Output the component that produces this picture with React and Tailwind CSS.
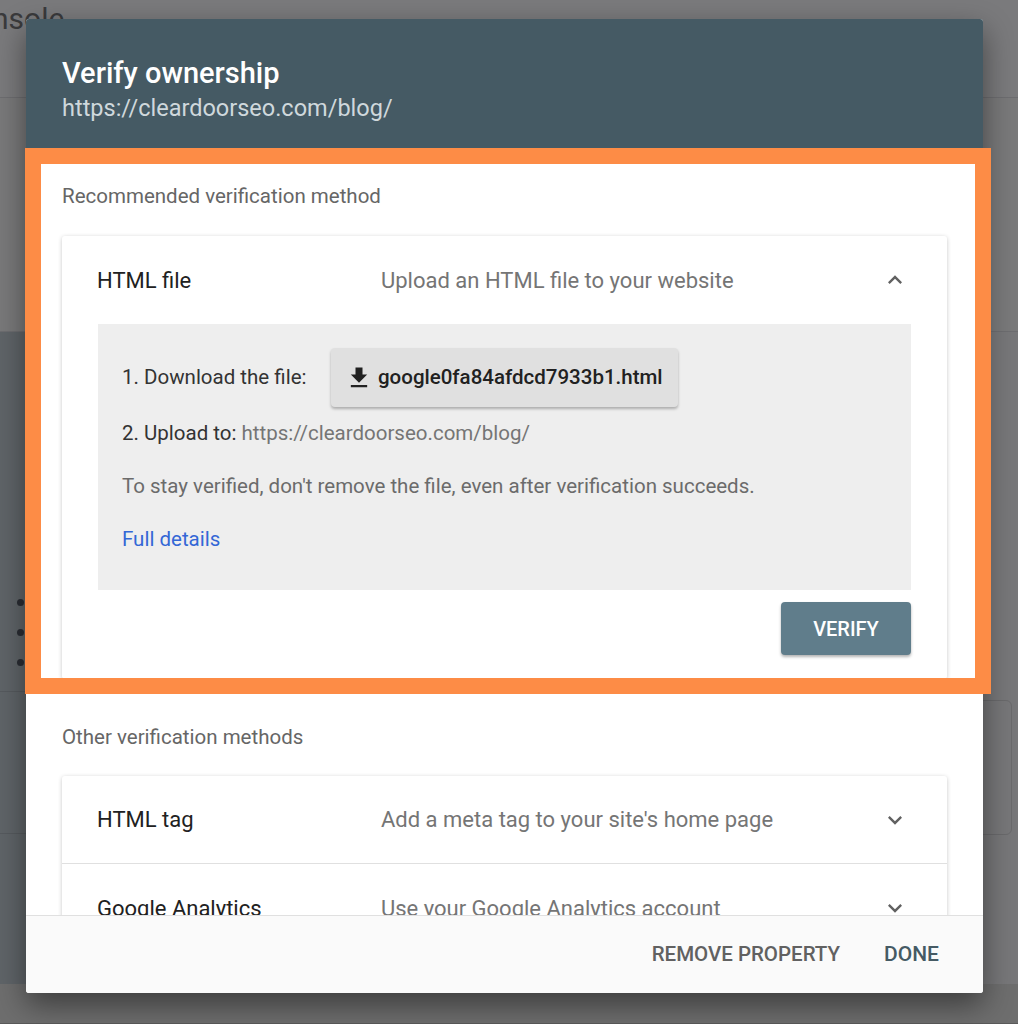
import React from "react";

const font = { fontFamily: "Roboto, 'Noto Sans', Arial, sans-serif" };

function ChevronUp() {
  return (
    <svg width="28" height="28" viewBox="0 0 24 24" fill="#616161">
      <path d="M12 8l-6 6 1.41 1.41L12 10.83l4.59 4.58L18 14z" />
    </svg>
  );
}
function ChevronDown() {
  return (
    <svg width="28" height="28" viewBox="0 0 24 24" fill="#616161">
      <path d="M16.59 8.59L12 13.17 7.41 8.59 6 10l6 6 6-6z" />
    </svg>
  );
}
function DownloadIcon() {
  return (
    <svg width="28" height="28" viewBox="0 0 24 24" fill="#212121">
      <path d="M19 9h-4V3H9v6H5l7 7 7-7zM5 18v2h14v-2H5z" />
    </svg>
  );
}

function MethodRow({ title, desc, border }) {
  return (
    <div className={`flex h-[88px] shrink-0 items-center pl-[35px] pr-[38px] ${border ? "border-b border-[#e0e0e0]" : ""}`}>
      <div className="w-[284px] text-[22px] text-[#212121]">{title}</div>
      <div className="flex-1 text-[22px] text-[#757575]">{desc}</div>
      <ChevronDown />
    </div>
  );
}

export default function App() {
  return (
    <div className="relative h-[1024px] w-[1018px] overflow-hidden bg-[#777779]" style={font}>
      {/* background page (dimmed) */}
      <div className="flex h-full flex-col">
        <div className="h-[98px] shrink-0 border-b border-[#6d6d70] bg-[#7a7a7c]">
          <div className="ml-[-8px] mt-[1px] text-[30px] leading-[36px] text-[#3a3a3c]">nsole</div>
        </div>
        <div className="h-[234px] shrink-0 border-b border-[#6d6d70] bg-[#79797a]" />
        <div className="flex flex-1">
          <div className="flex w-[300px] flex-col bg-[#5f6468]">
            <div className="h-[267px]" />
            <div className="flex flex-col gap-[23px] pl-[17px]">
              <div className="h-[7px] w-[7px] rounded-full bg-[#2a2d33]" />
              <div className="h-[7px] w-[7px] rounded-full bg-[#2a2d33]" />
              <div className="h-[7px] w-[7px] rounded-full bg-[#2a2d33]" />
            </div>
            <div className="mt-[25px] h-[143px] border-y border-[#565a5e]" />
            <div className="flex-1" />
            <div className="h-[40px] border-b border-[#5a5a5a] bg-[#6e6e6e]" />
          </div>
          <div className="flex flex-1 flex-col">
            <div className="h-[368px]" />
            <div className="ml-auto mr-[6px] h-[135px] w-[40px] rounded-[6px] border border-[#6a6a6c]" />
            <div className="flex-1" />
            <div className="h-[40px] border-b border-[#5a5a5a] bg-[#6e6e6e]" />
          </div>
        </div>
      </div>

      {/* modal */}
      <div className="absolute left-[26px] top-[19px] flex h-[974px] w-[957px] flex-col overflow-hidden rounded-[3px] bg-white shadow-[0_12px_30px_rgba(0,0,0,0.45)]">
        <div className="flex h-[129px] shrink-0 flex-col bg-[#455a64] px-9 pt-[36px]">
          <div className="text-[29px] font-medium leading-[36px] text-white">Verify ownership</div>
          <div className="mt-[2px] text-[23.5px] leading-[30px] text-[#cfd8dc]">https://cleardoorseo.com/blog/</div>
        </div>

        <div className="flex flex-1 flex-col overflow-hidden px-9 pt-[34px]">
          <div className="text-[20.5px] leading-[28px] text-[#666]">Recommended verification method</div>
          <div className="mt-[26px] shrink-0 rounded-[3px] bg-white pb-6 shadow-[0_1px_4px_rgba(0,0,0,0.22)]">
            <div className="flex h-[88px] items-center pl-[35px] pr-[38px]">
              <div className="w-[284px] text-[22px] text-[#212121]">HTML file</div>
              <div className="flex-1 text-[22px] text-[#757575]">Upload an HTML file to your website</div>
              <ChevronUp />
            </div>
            <div className="mx-9 bg-[#eeeeee] px-6 pb-[37px] pt-6">
              <div className="flex items-center">
                <div className="w-[209px] text-[20.5px] text-[#333]">1. Download the file:</div>
                <div className="flex h-[59px] w-[347px] items-center gap-[5px] rounded-[4px] bg-[#e0e0e0] pl-[14px] shadow-[0_2px_3px_rgba(0,0,0,0.28)]">
                  <DownloadIcon />
                  <span className="text-[20.5px] font-medium text-[#212121]">google0fa84afdcd7933b1.html</span>
                </div>
              </div>
              <div className="mt-[12px] text-[20.5px] leading-[28px] text-[#333]">
                2. Upload to: <span className="text-[#757575]">https://cleardoorseo.com/blog/</span>
              </div>
              <div className="mt-[25px] text-[20.5px] leading-[28px] text-[#6b6b6b]">
                To stay verified, don't remove the file, even after verification succeeds.
              </div>
              <div className="mt-[25px] text-[20.5px] leading-[28px] text-[#3367d6]">Full details</div>
            </div>
            <div className="mr-9 mt-[12px] flex justify-end">
              <div className="flex h-[53px] w-[130px] items-center justify-center rounded-[4px] bg-[#607d8b] text-[20px] font-medium text-white shadow-[0_2px_3px_rgba(0,0,0,0.3)]">
                VERIFY
              </div>
            </div>
          </div>

          <div className="mt-[44px] text-[20.5px] leading-[28px] text-[#666]">Other verification methods</div>
          <div className="mt-[25px] flex shrink-0 flex-col rounded-[3px] bg-white shadow-[0_1px_4px_rgba(0,0,0,0.22)]">
            <MethodRow title="HTML tag" desc="Add a meta tag to your site's home page" border />
            <MethodRow title="Google Analytics" desc="Use your Google Analytics account" />
          </div>
        </div>

        <div className="flex h-[78px] shrink-0 items-center justify-end gap-[44px] border-t border-[#e0e0e0] bg-[#fafafa] pr-[44px]">
          <div className="text-[20.5px] font-medium text-[#616161]">REMOVE PROPERTY</div>
          <div className="text-[21px] font-medium text-[#455a64]">DONE</div>
        </div>
      </div>

      {/* orange highlight annotation */}
      <div className="absolute left-[25px] top-[148px] h-[546px] w-[966px] border-[16px] border-[#fd8c46]" />
    </div>
  );
}
